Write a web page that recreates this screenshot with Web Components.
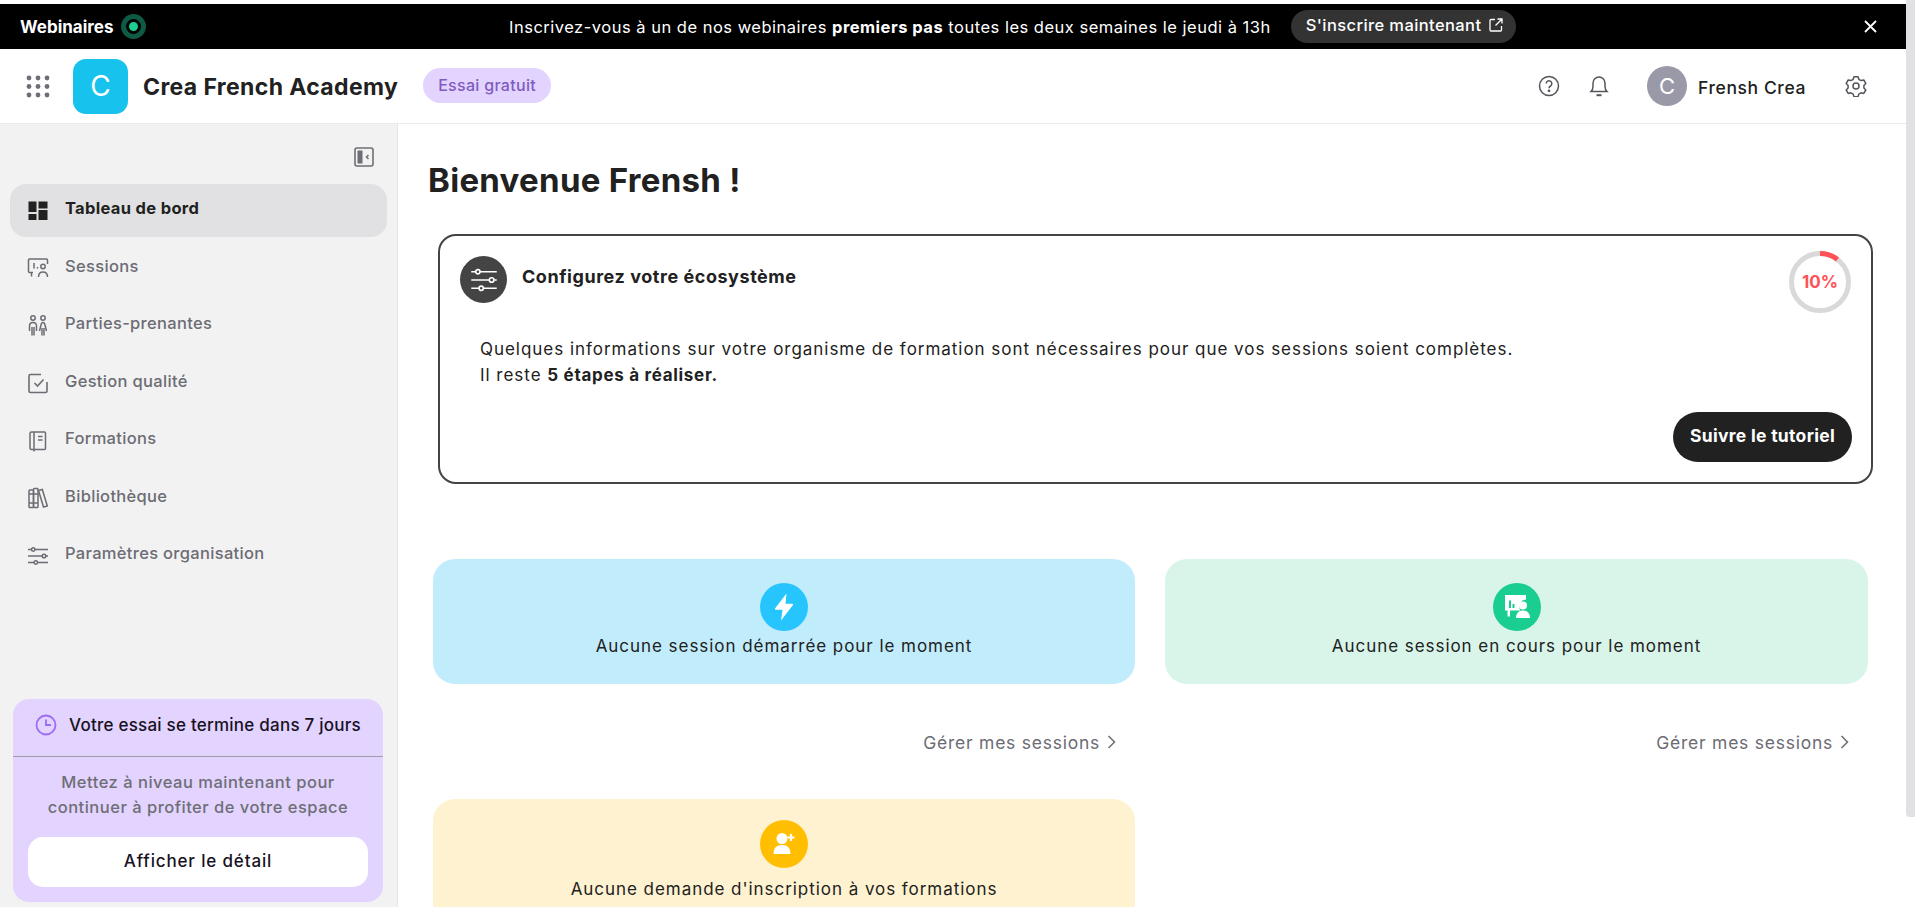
<!DOCTYPE html>
<html lang="fr">
<head>
<meta charset="utf-8">
<title>Crea French Academy</title>
<style>
    html, body{
        margin: 0;
        height: 907px;
        overflow: hidden;
        background: #fff;
        font-family: "Inter", "Liberation Sans", sans-serif;
        color: #212121;
    }
    body{
        display: flex;
        align-items: flex-start;
    }
</style>
</head>
<body>
<crea-app>
    <promo-banner></promo-banner>
    <top-header></top-header>
    <div slot="side">
        <side-nav>
            <nav-item icon="dash" active>Tableau de bord</nav-item>
            <nav-item icon="session">Sessions</nav-item>
            <nav-item icon="people">Parties-prenantes</nav-item>
            <nav-item icon="check">Gestion qualité</nav-item>
            <nav-item icon="book">Formations</nav-item>
            <nav-item icon="library">Bibliothèque</nav-item>
            <nav-item icon="sliders">Paramètres organisation</nav-item>
        </side-nav>
    </div>
    <dash-board slot="main"></dash-board>
</crea-app>
<fake-scrollbar></fake-scrollbar>

<script>
const ICONS = {
    dash: `<svg width="22" height="22" viewBox="0 0 22 22" fill="#212121"><rect x="1.500" y="1.500" width="8" height="10.500"/><rect x="11.500" y="1.500" width="9" height="7"/><rect x="11.500" y="10" width="9" height="10"/><rect x="1.500" y="14" width="8" height="6"/></svg>`,
    session: `<svg width="22" height="22" viewBox="0 0 22 22" fill="none" stroke="#6c6c74" stroke-width="1.500"><path d="M6 15.500H2.500a1 1 0 0 1-1-1V3a1 1 0 0 1 1-1h17a1 1 0 0 1 1 1v4"/><path d="M4.500 15.500v4M7 6v5.500M10.500 10v1.500"/><circle cx="16" cy="9.500" r="2.200"/><path d="M11.500 20c0-3.200 2-5 4.500-5s4.500 1.800 4.500 5"/></svg>`,
    people: `<svg width="22" height="22" viewBox="0 0 22 22" fill="none" stroke="#6c6c74" stroke-width="1.500"><circle cx="6" cy="3" r="2.200"/><circle cx="16" cy="3" r="2.200"/><path d="M2.500 16v-5c0-2 1.500-3.500 3.500-3.500S9.500 9 9.500 11v5M5 12v8.500M7 12v8.500"/><path d="M12.500 16l1.500-6c.3-1.500 1-2.500 2-2.500s1.700 1 2 2.500l1.500 6M15 13v7.500M17 13v7.500"/></svg>`,
    check: `<svg width="22" height="22" viewBox="0 0 22 22" fill="none" stroke="#6c6c74" stroke-width="1.600"><path d="M14 2.500H3.500A1.500 1.500 0 0 0 2 4v15a1.500 1.500 0 0 0 1.500 1.500h15A1.500 1.500 0 0 0 20 19V10"/><path d="M7.500 11l3 3 6-6.500"/></svg>`,
    book: `<svg width="22" height="22" viewBox="0 0 22 22" fill="none" stroke="#6c6c74" stroke-width="1.500"><path d="M4.500 2h13a1 1 0 0 1 1 1v15.500a1 1 0 0 1-1 1h-13A1.500 1.500 0 0 1 3 18V3.500A1.500 1.500 0 0 1 4.500 2z"/><path d="M7 2v17.500M11 6.500h4.500M11 10h4.500M7 19.500v2"/></svg>`,
    library: `<svg width="22" height="22" viewBox="0 0 22 22" fill="none" stroke="#6c6c74" stroke-width="1.500"><rect x="2" y="3" width="4.500" height="17.500" rx=".8"/><rect x="6.500" y="1.500" width="4.500" height="19" rx=".8"/><path d="M11.500 3.500l3.800-1 5 16.500-3.800 1zM2 7h9M2 16h9"/></svg>`,
    sliders: `<svg width="22" height="22" viewBox="0 0 22 22" fill="none" stroke="#6c6c74" stroke-width="1.500"><path d="M1 4.500h3.500M8 4.500h13M1 11h14M19 11h2M1 17.500h6M10.500 17.500H21"/><circle cx="6.200" cy="4.500" r="1.700"/><circle cx="17" cy="11" r="1.800"/><circle cx="8.800" cy="17.500" r="1.700"/></svg>`
}

class CreaApp extends HTMLElement{
    constructor() {
        super()
        this.attachShadow({ mode: 'open' })
        this.shadowRoot.innerHTML = `
            <style>
                :host{
                    display: flex;
                    flex-direction: column;
                    flex: 1;
                    min-width: 0;
                    height: 907px;
                    padding-top: 4px;
                    box-sizing: border-box;
                }
                .body{
                    display: flex;
                    flex: 1;
                    min-height: 0;
                }
                .body ::slotted([slot="side"]){
                    width: 398px;
                    flex: none;
                    display: flex;
                }
                .body ::slotted([slot="main"]){
                    flex: 1;
                    min-width: 0;
                }
            </style>
            <slot></slot>
            <div class="body">
                <slot name="side"></slot>
                <slot name="main"></slot>
            </div>
        `
    }
}

class PromoBanner extends HTMLElement{
    constructor() {
        super()
        this.attachShadow({ mode: 'open' })
        this.shadowRoot.innerHTML = `
            <style>
                :host{
                    display: grid;
                    grid-template-columns: 509px auto 1fr;
                    align-items: center;
                    height: 45px;
                    background: #000;
                    color: #fff;
                    font-size: 16.500px;
                    letter-spacing: .5px;
                    white-space: nowrap;
                }
                .left{
                    display: flex;
                    align-items: center;
                    gap: 6px;
                    padding-left: 20px;
                    font-size: 17px;
                    font-weight: 700;
                    letter-spacing: 0;
                }
                .live{
                    width: 9px;
                    height: 9px;
                    border-radius: 50%;
                    background: #1bcf92;
                    border: 3px solid #000;
                    box-shadow: 0 0 0 5px #0e5a45;
                    margin-left: 7px;
                }
                .center{
                    display: flex;
                    align-items: center;
                    gap: 20px;
                }
                b{ font-weight: 700; }
                .cta{
                    display: flex;
                    align-items: center;
                    gap: 7px;
                    height: 33px;
                    padding: 0 12px 2px 15px;
                    box-sizing: border-box;
                    border-radius: 17px;
                    background: #333;
                    font-weight: 500;
                    letter-spacing: .4px;
                    margin-top: -1px;
                }
                .close{
                    justify-self: end;
                    display: flex;
                    padding-right: 29px;
                }
            </style>
            <div class="left">Webinaires <span class="live"></span></div>
            <div class="center">
                <span>Inscrivez-vous à un de nos webinaires <b>premiers pas</b> toutes les deux semaines le jeudi à 13h</span>
                <span class="cta">S'inscrire maintenant
                    <svg width="16" height="16" viewBox="0 0 16 16" fill="none" stroke="#fff" stroke-width="1.300"><path d="M7 2.500H3a1 1 0 0 0-1 1V13a1 1 0 0 0 1 1h9.500a1 1 0 0 0 1-1V9M9.500 2H14v4.500M14 2L7.500 8.500"/></svg>
                </span>
            </div>
            <div class="close">
                <svg width="13" height="13" viewBox="0 0 13 13" fill="none" stroke="#fff" stroke-width="1.800"><path d="M1 1l11 11M12 1L1 12"/></svg>
            </div>
        `
    }
}

class TopHeader extends HTMLElement{
    constructor() {
        super()
        this.attachShadow({ mode: 'open' })
        let dots = ''
        for (const y of [3, 11.500, 20]) {
            for (const x of [3, 12, 21]) {
                dots += `<circle cx="${x}" cy="${y}" r="2.400"/>`
            }
        }
        this.shadowRoot.innerHTML = `
            <style>
                :host{
                    display: flex;
                    align-items: center;
                    height: 75px;
                    box-sizing: border-box;
                    border-bottom: 1px solid #eaeaea;
                    padding: 0 39px 0 26px;
                    background: #fff;
                }
                .logo{
                    display: flex;
                    align-items: center;
                    justify-content: center;
                    width: 55px;
                    height: 55px;
                    margin-left: 23px;
                    border-radius: 13px;
                    background: #17c2ec;
                    color: #fff;
                    font-size: 28px;
                }
                h2{
                    margin: 2px 0 0 15px;
                    font-size: 23px;
                    font-weight: 700;
                    letter-spacing: .37px;
                    white-space: nowrap;
                }
                .trial{
                    display: flex;
                    align-items: center;
                    height: 35px;
                    margin: -2px 0 0 25px;
                    padding: 0 15px;
                    border-radius: 18px;
                    background: #e3d3ff;
                    color: #7e5cc0;
                    font-size: 16px;
                    font-weight: 500;
                    letter-spacing: .3px;
                    white-space: nowrap;
                }
                .right{
                    display: flex;
                    align-items: center;
                    margin-left: auto;
                }
                .avatar{
                    display: flex;
                    align-items: center;
                    justify-content: center;
                    width: 40px;
                    height: 40px;
                    margin-left: 38px;
                    border-radius: 50%;
                    background: #9a99a8;
                    color: #fff;
                    font-size: 22px;
                }
                .name{
                    margin: 2px 39px 0 11px;
                    font-size: 17.500px;
                    font-weight: 500;
                    letter-spacing: .6px;
                    white-space: nowrap;
                }
                .bell{ margin-left: 29px; }
            </style>
            <svg width="24" height="23" viewBox="0 0 24 23" fill="#6e6e76">${dots}</svg>
            <div class="logo">C</div>
            <h2>Crea French Academy</h2>
            <div class="trial">Essai gratuit</div>
            <div class="right">
                <svg width="22" height="22" viewBox="0 0 22 22" fill="none" stroke="#55555c" stroke-width="1.500"><circle cx="11" cy="11" r="9.500"/><path d="M8.200 8.600a2.800 2.800 0 1 1 4.300 2.400c-1 .6-1.500 1.100-1.500 2.200"/><circle cx="11" cy="15.800" r=".6" fill="#55555c"/></svg>
                <svg class="bell" width="20" height="22" viewBox="0 0 20 22" fill="none" stroke="#55555c" stroke-width="1.500"><path d="M2 16.500c1.300-1.300 2-2.500 2-5V8a6 6 0 0 1 12 0v3.500c0 2.500.7 3.700 2 5z"/><path d="M7.500 20.200h5" stroke-width="2"/></svg>
                <div class="avatar">C</div>
                <div class="name">Frensh Crea</div>
                <svg width="22" height="22" viewBox="0 0 22 22" fill="none" stroke="#55555c" stroke-width="1.500"><path d="M9 1.700h4l.8 2.600 2.300 1.300 2.700-.6 2 3.400-1.900 2 0 2.600 1.900 2-2 3.400-2.700-.6-2.300 1.300-.8 2.600H9l-.8-2.600-2.300-1.300-2.700.6-2-3.400 1.900-2 0-2.600-1.900-2 2-3.400 2.700.6 2.300-1.300z" stroke-linejoin="round"/><circle cx="11" cy="11" r="3"/></svg>
            </div>
        `
    }
}

class SideNav extends HTMLElement{
    constructor() {
        super()
        this.attachShadow({ mode: 'open' })
        this.shadowRoot.innerHTML = `
            <style>
                :host{
                    display: flex;
                    flex-direction: column;
                    width: 100%;
                    box-sizing: border-box;
                    padding: 23px 10px 5px 10px;
                    background: #f2f2f2;
                    border-right: 1px solid #e4e4e4;
                }
                .collapse{
                    align-self: flex-end;
                    display: flex;
                    margin: 0 12px 17px 0;
                    padding-right: 1px;
                }
                nav{
                    display: flex;
                    flex-direction: column;
                    gap: 4.500px;
                }
                trial-card{ margin-top: auto; }
            </style>
            <div class="collapse">
                <svg width="20" height="20" viewBox="0 0 20 20"><rect x="1" y="1" width="18" height="18" rx="2" fill="none" stroke="#6e6e76" stroke-width="1.600"/><rect x="3.500" y="3.500" width="5" height="13" fill="#6e6e76"/><path d="M14.500 8l-2 2 2 2" fill="none" stroke="#6e6e76" stroke-width="1.500"/></svg>
            </div>
            <nav><slot></slot></nav>
            <trial-card></trial-card>
        `
    }
}

class NavItem extends HTMLElement{
    constructor() {
        super()
        this.attachShadow({ mode: 'open' })
    }
    connectedCallback() {
        const active = this.hasAttribute('active')
        this.shadowRoot.innerHTML = `
            <style>
                :host{
                    display: flex;
                    align-items: center;
                    gap: 16px;
                    height: 53px;
                    padding-left: 17px;
                    border-radius: 16px;
                    background: ${active ? '#e1e1e3' : 'transparent'};
                    color: ${active ? '#212121' : '#6c6c74'};
                    font-size: 16.500px;
                    font-weight: ${active ? 700 : 500};
                    letter-spacing: .32px;
                    white-space: nowrap;
                }
                span{ margin-top: -5px; }
                svg{ display: block; }
            </style>
            ${ICONS[this.getAttribute('icon')]}
            <span><slot></slot></span>
        `
    }
}

class TrialCard extends HTMLElement{
    constructor() {
        super()
        this.attachShadow({ mode: 'open' })
        this.shadowRoot.innerHTML = `
            <style>
                :host{
                    display: block;
                    margin: 0 4px 0 3px;
                    border-radius: 16px;
                    background: #e3d3ff;
                    text-align: center;
                }
                .head{
                    display: flex;
                    align-items: center;
                    justify-content: center;
                    gap: 12px;
                    height: 58px;
                    padding-bottom: 6px;
                    border-bottom: 1px solid #a39aa8;
                    box-sizing: border-box;
                    color: #17121f;
                    font-size: 17px;
                    font-weight: 500;
                    letter-spacing: .23px;
                    white-space: nowrap;
                }
                p{
                    margin: 13px 0 0;
                    color: #6e6e76;
                    font-size: 16.500px;
                    font-weight: 500;
                    line-height: 25px;
                    letter-spacing: .5px;
                    white-space: nowrap;
                }
                .btn{
                    display: flex;
                    align-items: center;
                    justify-content: center;
                    height: 50px;
                    margin: 17px 15px 15px;
                    padding-bottom: 3px;
                    box-sizing: border-box;
                    border-radius: 15px;
                    background: #fff;
                    color: #17121f;
                    font-size: 17px;
                    font-weight: 500;
                    letter-spacing: .85px;
                }
            </style>
            <div class="head">
                <svg width="22" height="22" viewBox="0 0 22 22" fill="none" stroke="#9a6cf5" stroke-width="1.800"><circle cx="11" cy="11" r="9.500"/><path d="M11 5.500V11h5"/></svg>
                Votre essai se termine dans 7 jours
            </div>
            <p>Mettez à niveau maintenant pour<br>continuer à profiter de votre espace</p>
            <div class="btn">Afficher le détail</div>
        `
    }
}

class DashBoard extends HTMLElement{
    constructor() {
        super()
        this.attachShadow({ mode: 'open' })
        this.shadowRoot.innerHTML = `
            <style>
                :host{
                    display: block;
                    padding: 33px 33px 0 30px;
                    height: 100%;
                    box-sizing: border-box;
                    overflow: hidden;
                }
                h1{
                    margin: 0;
                    font-size: 33px;
                    line-height: 46px;
                    font-weight: 700;
                    letter-spacing: .3px;
                }
                setup-card{ margin: 31px 0 75px 10px; }
                .grid{
                    display: grid;
                    grid-template-columns: 702px 703px;
                    column-gap: 30px;
                    margin: 0 5px;
                }
            </style>
            <h1>Bienvenue Frensh !</h1>
            <setup-card></setup-card>
            <div class="grid">
                <stat-card color="#c1ecfc" dot="#26c5fe" icon="bolt" link>Aucune session démarrée pour le moment</stat-card>
                <stat-card color="#d9f5ea" dot="#1acd90" icon="board" link>Aucune session en cours pour le moment</stat-card>
                <stat-card color="#fef2d0" dot="#ffbf00" icon="user" pad="21" gap="9">Aucune demande d'inscription à vos formations</stat-card>
            </div>
        `
    }
}

class SetupCard extends HTMLElement{
    constructor() {
        super()
        this.attachShadow({ mode: 'open' })
        this.shadowRoot.innerHTML = `
            <style>
                :host{
                    display: block;
                    position: relative;
                    height: 250px;
                    box-sizing: border-box;
                    padding: 20px 19px 20px 20px;
                    border: 2px solid #444;
                    border-radius: 18px;
                }
                .head{
                    display: flex;
                    align-items: center;
                    gap: 15px;
                }
                .badge{
                    display: flex;
                    align-items: center;
                    justify-content: center;
                    width: 47px;
                    height: 47px;
                    border-radius: 50%;
                    background: #444;
                }
                h3{
                    margin: -6px 0 0;
                    font-size: 18px;
                    font-weight: 700;
                    letter-spacing: .55px;
                }
                p{
                    margin: 33px 0 0 20px;
                    font-size: 17px;
                    line-height: 26px;
                    letter-spacing: .97px;
                    white-space: nowrap;
                }
                b{
                    font-weight: 700;
                    letter-spacing: .7px;
                }
                .foot{
                    display: flex;
                    justify-content: flex-end;
                    margin-top: 24px;
                }
                .btn{
                    display: flex;
                    align-items: center;
                    justify-content: center;
                    width: 179px;
                    height: 50px;
                    padding-bottom: 3px;
                    box-sizing: border-box;
                    border-radius: 25px;
                    background: #212121;
                    color: #fff;
                    font-size: 17.500px;
                    font-weight: 700;
                    letter-spacing: .3px;
                    white-space: nowrap;
                }
                .ring{
                    position: absolute;
                    top: 15px;
                    right: 20px;
                    width: 62px;
                    height: 62px;
                    display: flex;
                    align-items: center;
                    justify-content: center;
                    color: #ff5258;
                    font-size: 17px;
                    font-weight: 700;
                }
                .ring svg{
                    position: absolute;
                    inset: 0;
                }
            </style>
            <div class="head">
                <div class="badge">
                    <svg width="28" height="28" viewBox="0 0 22 22" fill="none" stroke="#fff" stroke-width="1.300"><path d="M1 4.500h3.500M8 4.500h13M1 11h14M19 11h2M1 17.500h6M10.500 17.500H21"/><circle cx="6.200" cy="4.500" r="1.700"/><circle cx="17" cy="11" r="1.800"/><circle cx="8.800" cy="17.500" r="1.700"/></svg>
                </div>
                <h3>Configurez votre écosystème</h3>
            </div>
            <p>Quelques informations sur votre organisme de formation sont nécessaires pour que vos sessions soient complètes.<br>Il reste <b>5 étapes à réaliser.</b></p>
            <div class="foot"><div class="btn">Suivre le tutoriel</div></div>
            <div class="ring">
                <svg width="62" height="62" viewBox="0 0 62 62" fill="none" stroke-width="5"><circle cx="31" cy="31" r="28.500" stroke="#d9d9d9"/><path d="M31 2.500A28.500 28.500 0 0 1 48.500 8.500" stroke="#ff5258"/></svg>
                10%
            </div>
        `
    }
}

class StatCard extends HTMLElement{
    constructor() {
        super()
        this.attachShadow({ mode: 'open' })
    }
    getIcon() {
        const name = this.getAttribute('icon')
        if (name === 'bolt') {
            return `<svg width="24" height="30" viewBox="0 0 24 30" fill="#fff"><path d="M14.500 1.500L3 16.500a.8.8 0 0 0 .7 1.200H10.500L9 28.500L21 13a.8.8 0 0 0-.7-1.200H13.500z"/></svg>`
        }
        if (name === 'board') {
            return `<svg width="32" height="32" viewBox="0 0 32 32"><path fill="#fff" d="M4 4h21v4.500a7 7 0 0 0-6.500 9c.2.700.5 1.300.9 1.900H9v6H6.500v-6H4z"/><path d="M9 9.500v7.500M12.500 13v4" stroke="#1acd90" stroke-width="2"/><circle cx="22" cy="14.500" r="4" fill="#fff"/><path fill="#fff" d="M15 27c0-5 3-7.500 7-7.500s7 2.500 7 7.500z"/></svg>`
        }
        return `<svg width="30" height="30" viewBox="0 0 30 30" fill="#fff"><circle cx="13" cy="9.500" r="5.500"/><path d="M4.500 25c0-6 3-9 8.500-9s8.500 3 8.500 9z"/><path d="M22 5v7M18.500 8.500h7" stroke="#fff" stroke-width="2.200"/></svg>`
    }
    connectedCallback() {
        const link = this.hasAttribute('link') ? `
            <div class="link">Gérer mes sessions
                <svg width="9" height="16" viewBox="0 0 9 16" fill="none" stroke="#6c6c74" stroke-width="1.500"><path d="M1.500 2l6 6-6 6"/></svg>
            </div>` : ''
        this.shadowRoot.innerHTML = `
            <style>
                :host{
                    display: block;
                }
                .box{
                    height: 125px;
                    box-sizing: border-box;
                    padding-top: ${this.getAttribute('pad') || 24}px;
                    border-radius: 22px;
                    background: ${this.getAttribute('color')};
                    text-align: center;
                }
                .dot{
                    display: flex;
                    align-items: center;
                    justify-content: center;
                    width: 48px;
                    height: 48px;
                    margin: 0 auto;
                    border-radius: 50%;
                    background: ${this.getAttribute('dot')};
                }
                .txt{
                    margin-top: ${this.getAttribute('gap') || 3}px;
                    font-size: 17px;
                    line-height: 24px;
                    font-weight: 400;
                    letter-spacing: .95px;
                    color: #212121;
                    white-space: nowrap;
                }
                .link{
                    display: flex;
                    align-items: center;
                    justify-content: flex-end;
                    gap: 7px;
                    height: 24px;
                    margin: 46px 19px 45px 0;
                    color: #6c6c74;
                    font-size: 17.500px;
                    font-weight: 400;
                    letter-spacing: .75px;
                    white-space: nowrap;
                }
            </style>
            <div class="box">
                <div class="dot">${this.getIcon()}</div>
                <div class="txt"><slot></slot></div>
            </div>
            ${link}
        `
    }
}

class FakeScrollbar extends HTMLElement{
    constructor() {
        super()
        this.attachShadow({ mode: 'open' })
        this.shadowRoot.innerHTML = `
            <style>
                :host{
                    display: block;
                    flex: none;
                    width: 9px;
                    height: 817px;
                    background: #e1e1e4;
                    border-radius: 0 0 0 4px;
                }
            </style>
        `
    }
}

customElements.define('promo-banner', PromoBanner)
customElements.define('top-header', TopHeader)
customElements.define('nav-item', NavItem)
customElements.define('trial-card', TrialCard)
customElements.define('side-nav', SideNav)
customElements.define('setup-card', SetupCard)
customElements.define('stat-card', StatCard)
customElements.define('dash-board', DashBoard)
customElements.define('fake-scrollbar', FakeScrollbar)
customElements.define('crea-app', CreaApp)
</script>
</body>
</html>
